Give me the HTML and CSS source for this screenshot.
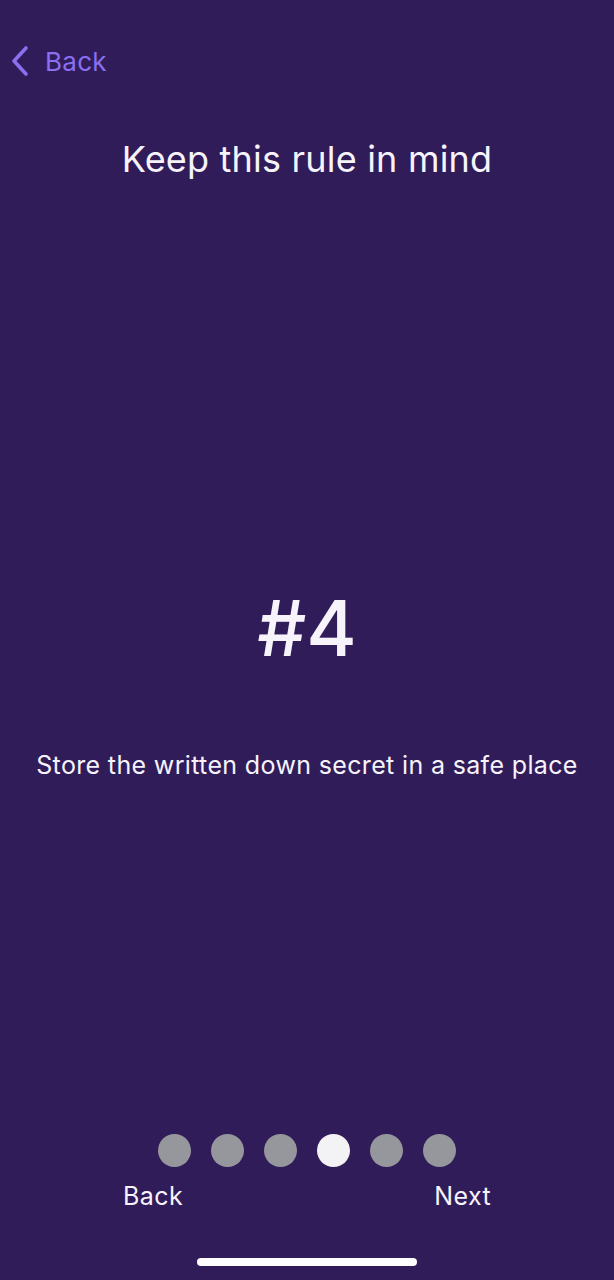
FILE: index.html
```html
<!DOCTYPE html>
<html>
<head>
<meta charset="utf-8">
<link rel="stylesheet" href="styles.css">
</head>
<body>
<div class="screen">
  <div class="nav">
    <svg class="chev" width="20" height="32" viewBox="0 0 20 32"><path d="M16 3 L4 16 L16 29" fill="none" stroke="#8a6ff0" stroke-width="3.6" stroke-linecap="round" stroke-linejoin="round"/></svg>
    <span class="nav-back">Back</span>
  </div>
  <h1 class="title">Keep this rule in mind</h1>
  <div class="content">
    <div class="num">#4</div>
    <p class="rule">Store the written down secret in a safe place</p>
  </div>
  <div class="footer">
    <div class="dots">
      <span class="dot"></span><span class="dot"></span><span class="dot"></span><span class="dot active"></span><span class="dot"></span><span class="dot"></span>
    </div>
    <div class="actions">
      <span class="act">Back</span>
      <span class="act">Next</span>
    </div>
  </div>
  <div class="home"></div>
</div>
</body>
</html>
```
FILE: styles.css
```css
html, body {
  margin: 0;
  padding: 0;
  background: #311c5a;
}
.screen {
  width: 614px;
  height: 1280px;
  display: flex;
  flex-direction: column;
  font-family: Inter, "Noto Sans", sans-serif;
  color: #f6f3fb;
  overflow: hidden;
}
.nav {
  display: flex;
  align-items: center;
  padding: 45px 0 0 10px;
  height: 32px;
  gap: 15px;
}
.nav-back {
  font-size: 26px;
  color: #8a6ff0;
  letter-spacing: 0.3px;
}
.title {
  margin: 60px 0 0;
  font-size: 36px;
  font-weight: 400;
  text-align: center;
  line-height: 44px;
  letter-spacing: 0.2px;
}
.content {
  display: flex;
  flex-direction: column;
  align-items: center;
  margin-top: 402px;
}
.num {
  font-size: 77px;
  line-height: 90px;
  font-weight: 500;
}
.rule {
  margin: 77px 0 0;
  font-size: 25px;
  line-height: 30px;
  letter-spacing: 0.35px;
}
.footer {
  margin-top: auto;
  display: flex;
  flex-direction: column;
  align-items: center;
}
.dots {
  display: flex;
  gap: 20px;
}
.dot {
  width: 33px;
  height: 33px;
  border-radius: 50%;
  background: #96979d;
}
.dot.active {
  background: #f3f3f5;
}
.actions {
  display: flex;
  justify-content: space-between;
  width: 368px;
  margin-top: 14px;
}
.act {
  font-size: 25px;
  line-height: 30px;
  letter-spacing: 0.4px;
}
.home {
  align-self: center;
  width: 220px;
  height: 8px;
  border-radius: 4px;
  background: #ffffff;
  margin: 47px 0 14px;
}
```
